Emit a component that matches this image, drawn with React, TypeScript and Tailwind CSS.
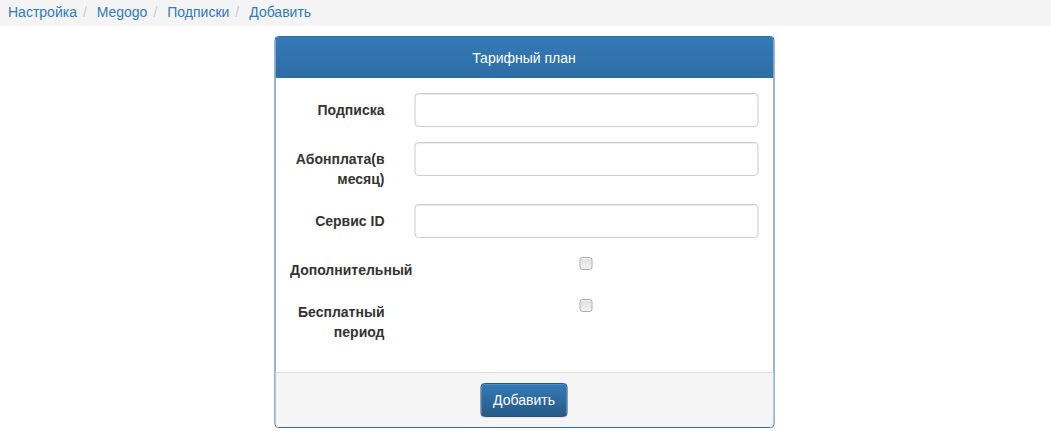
import React from "react";

const Checkbox = () => (
  <span className="mt-[4px] block h-[13px] w-[13px] rounded-[3px] border border-[#a9a9a9] bg-gradient-to-b from-[#dedede] to-[#f3f3f3] shadow-[inset_0_1px_1px_rgba(255,255,255,0.8)]" />
);

const Input = () => (
  <input
    type="text"
    className="block h-[34px] w-full rounded-[4px] border border-[#cccccc] bg-white px-3 text-[14px] shadow-[inset_0_1px_1px_rgba(0,0,0,0.075)] outline-none"
  />
);

const Label = ({ children }: { children: React.ReactNode }) => (
  <label className="w-[124.5px] shrink-0 px-[15px] pt-[7px] text-right text-[14px] font-bold leading-[20px] text-[#333333]">
    {children}
  </label>
);

const Sep = () => (
  <span className="pl-[6px] pr-[10px] text-[#cccccc]">/</span>
);

export default function App() {
  return (
    <div
      className="min-h-[431px] bg-white text-[14px] leading-[20px] text-[#333333]"
      style={{ fontFamily: '"Liberation Sans", Arial, sans-serif' }}
    >
      <div className="flex h-[26px] items-center bg-[#f4f4f4] px-[8px] pb-[2px]">
        <a className="text-[#337ab7]">Настройка</a>
        <Sep />
        <a className="text-[#337ab7]">Megogo</a>
        <Sep />
        <a className="text-[#337ab7]">Подписки</a>
        <Sep />
        <a className="text-[#337ab7]">Добавить</a>
      </div>

      <div className="mx-auto mt-[10px] w-[500px] translate-x-[-1.5px] overflow-hidden rounded-[4px] border border-[#2e6da4] bg-white">
        <div className="flex h-[41px] items-center justify-center bg-gradient-to-b from-[#337ab7] to-[#2e6da4] text-[14px] text-white">
          Тарифный план
        </div>
        <div className="py-[15px]">
          <div className="mb-[15px] flex">
            <Label>Подписка</Label>
            <div className="flex-1 px-[15px]">
              <Input />
            </div>
          </div>
          <div className="mb-[15px] flex">
            <Label>Абонплата(в месяц)</Label>
            <div className="flex-1 px-[15px]">
              <Input />
            </div>
          </div>
          <div className="mb-[15px] flex">
            <Label>Сервис ID</Label>
            <div className="flex-1 px-[15px]">
              <Input />
            </div>
          </div>
          <div className="mb-[15px] flex">
            <Label>
              <span className="whitespace-nowrap">Дополнительный</span>
            </Label>
            <div className="flex flex-1 justify-center px-[15px]">
              <Checkbox />
            </div>
          </div>
          <div className="mb-[15px] flex">
            <Label>Бесплатный период</Label>
            <div className="flex flex-1 justify-center px-[15px]">
              <Checkbox />
            </div>
          </div>
        </div>
        <div className="flex justify-center border-t border-[#dddddd] bg-[#f5f5f5] px-[15px] py-[10px]">
          <button className="h-[34px] rounded-[4px] border border-[#245580] bg-gradient-to-b from-[#337ab7] to-[#265a88] px-[12px] text-[14px] text-white shadow-[inset_0_1px_0_rgba(255,255,255,0.15),0_1px_1px_rgba(0,0,0,0.075)]">
            Добавить
          </button>
        </div>
      </div>
    </div>
  );
}
